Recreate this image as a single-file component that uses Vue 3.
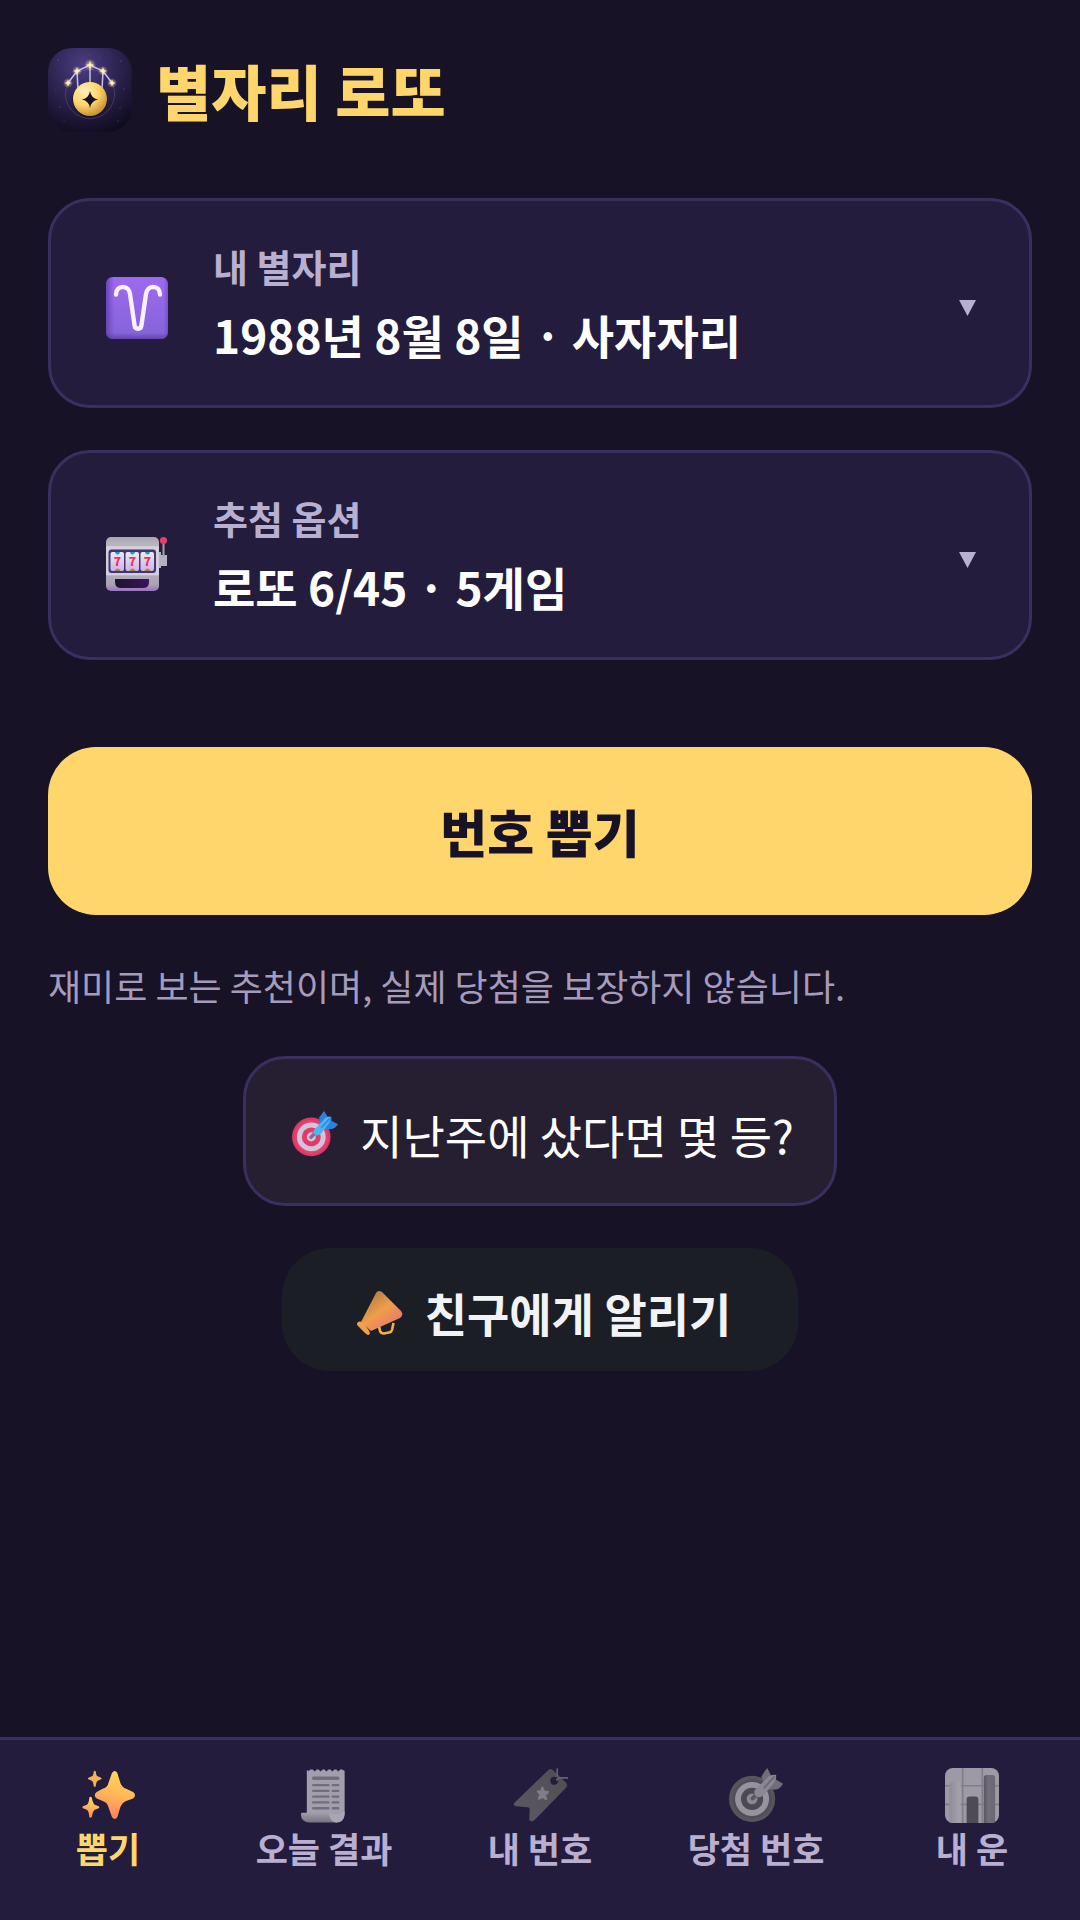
<script setup>
import { ref } from 'vue'

const cards = [
  { id: 'sign', label: '내 별자리', value: '1988년 8월 8일 · 사자자리' },
  { id: 'option', label: '추첨 옵션', value: '로또 6/45 · 5게임' },
]

const tabs = [
  { id: 'draw', label: '뽑기' },
  { id: 'today', label: '오늘 결과' },
  { id: 'mine', label: '내 번호' },
  { id: 'winning', label: '당첨 번호' },
  { id: 'luck', label: '내 운' },
]

const active = ref('draw')
</script>

<template>
  <div class="app">
    <header class="header">
      <svg class="logo" viewBox="0 0 84 84" aria-hidden="true">
        <defs>
          <radialGradient id="logo-bg" cx="0.42" cy="0.2" r="0.85">
            <stop offset="0" stop-color="#4b3d80" />
            <stop offset="0.5" stop-color="#2c2350" />
            <stop offset="1" stop-color="#100c1f" />
          </radialGradient>
          <radialGradient id="logo-ball" cx="0.35" cy="0.28" r="0.8">
            <stop offset="0" stop-color="#fff0bd" />
            <stop offset="0.5" stop-color="#ffd66b" />
            <stop offset="1" stop-color="#bd8428" />
          </radialGradient>
          <radialGradient id="logo-glow">
            <stop offset="0" stop-color="#ffe9a0" stop-opacity="0.8" />
            <stop offset="1" stop-color="#ffe9a0" stop-opacity="0" />
          </radialGradient>
        </defs>
        <rect width="84" height="84" rx="24" fill="url(#logo-bg)" />
        <g fill="#a79bd6" opacity="0.3">
          <circle cx="10" cy="12" r="0.8" /><circle cx="73" cy="13" r="0.8" />
          <circle cx="42" cy="7" r="0.6" /><circle cx="52" cy="8" r="0.6" />
          <circle cx="8" cy="42" r="0.6" /><circle cx="76" cy="41" r="0.7" />
          <circle cx="12" cy="59" r="0.8" /><circle cx="72" cy="60" r="0.7" />
          <circle cx="16" cy="73" r="0.6" /><circle cx="70" cy="73" r="0.7" />
        </g>
        <circle cx="42" cy="46" r="24.5" fill="none" stroke="#8a80a8" stroke-opacity="0.3" />
        <path d="M20 35 29 23 42 17 55 23 64 35M29 23 30 42M42 17V36M55 23 54 42" fill="none" stroke="#c9bdf5" stroke-width="1.5" />
        <g fill="url(#logo-glow)">
          <circle cx="20" cy="35" r="5" /><circle cx="29" cy="23" r="5" /><circle cx="42" cy="17" r="6" />
          <circle cx="55" cy="23" r="5" /><circle cx="64" cy="35" r="5" />
        </g>
        <path d="M20 31.500l1 2.500 2.500 1-2.500 1-1 2.500-1-2.500-2.500-1 2.500-1zM29 19l1 3 3 1-3 1-1 3-1-3-3-1 3-1zM42 12.500l1 3.500 3.500 1-3.500 1-1 3.500-1-3.500-3.500-1 3.500-1zM55 19l1 3 3 1-3 1-1 3-1-3-3-1 3-1zM64 31.500l1 2.500 2.500 1-2.500 1-1 2.500-1-2.500-2.500-1 2.500-1z" fill="#fff1bd" />
        <circle cx="42" cy="52" r="17.500" fill="#0d0919" opacity="0.5" />
        <circle cx="42" cy="51" r="17" fill="url(#logo-ball)" />
        <path d="M42 43Q43 50 50 51.500 43 53 42 60 41 53 34 51.500 41 50 42 43Z" fill="#171225" />
      </svg>
      <h1 class="title">별자리 로또</h1>
    </header>

    <main class="main">
      <div class="cards">
        <button v-for="card in cards" :key="card.id" type="button" class="card">
          <svg v-if="card.id === 'sign'" class="card-icon" viewBox="0 0 62 62" aria-hidden="true">
            <defs>
              <linearGradient id="aries-bg" x1="0" y1="0" x2="0" y2="1">
                <stop offset="0" stop-color="#9e69f0" />
                <stop offset="1" stop-color="#8364d8" />
              </linearGradient>
              <linearGradient id="aries-side" x1="0" y1="0" x2="1" y2="0">
                <stop offset="0" stop-color="#5f3ca8" stop-opacity="0.8" />
                <stop offset="0.130" stop-color="#5f3ca8" stop-opacity="0" />
                <stop offset="0.930" stop-color="#5f3ca8" stop-opacity="0" />
                <stop offset="1" stop-color="#5f3ca8" stop-opacity="0.5" />
              </linearGradient>
              <linearGradient id="aries-foot" x1="0" y1="0" x2="0" y2="1">
                <stop offset="0.900" stop-color="#5a3ba6" stop-opacity="0" />
                <stop offset="1" stop-color="#5a3ba6" stop-opacity="0.8" />
              </linearGradient>
            </defs>
            <rect width="62" height="62" rx="7" fill="url(#aries-bg)" />
            <rect width="62" height="62" rx="7" fill="url(#aries-side)" />
            <rect width="62" height="62" rx="7" fill="url(#aries-foot)" />
            <path d="M10 17.500C10 12.500 13 10 17 10S23.500 13 24 17L28.500 48C29 53 35 53 35.500 48L40 17C40.500 13 43 10 47 10S54 12.500 54 17.500" fill="none" stroke="#fbf0ff" stroke-width="4.400" stroke-linecap="round" />
          </svg>
          <svg v-else class="card-icon" viewBox="0 -8 62 62" aria-hidden="true">
            <defs>
              <linearGradient id="slot-body" x1="0" y1="0" x2="0" y2="1">
                <stop offset="0" stop-color="#aaa5b0" />
                <stop offset="0.160" stop-color="#bbb6c0" />
                <stop offset="0.180" stop-color="#d5cfdf" />
                <stop offset="0.700" stop-color="#d5cde1" />
                <stop offset="0.720" stop-color="#b0aab8" />
                <stop offset="0.880" stop-color="#aaa2b4" />
                <stop offset="1" stop-color="#9b71c4" />
              </linearGradient>
              <linearGradient id="slot-reel" x1="0" y1="0" x2="0" y2="1">
                <stop offset="0" stop-color="#eeeaf2" />
                <stop offset="1" stop-color="#ceb4e9" />
              </linearGradient>
              <linearGradient id="slot-mouth" x1="0" y1="0" x2="1" y2="0">
                <stop offset="0" stop-color="#1e1233" />
                <stop offset="1" stop-color="#3a1459" />
              </linearGradient>
            </defs>
            <path d="M52 15h3v3h6v11h-6v2h-3z" fill="#b7b1bf" />
            <path d="M57.500 6v14" stroke="#a6a1ad" stroke-width="2" />
            <circle cx="57.500" cy="3.500" r="3.600" fill="#ea3d63" />
            <rect width="53" height="54" rx="5" fill="url(#slot-body)" />
            <rect x="2.500" y="12.500" width="47.500" height="23.500" rx="3" fill="#40376f" />
            <g v-for="n in 3" :key="n" :transform="`translate(${4.5 + (n - 1) * 15} 15)`">
              <rect width="13.500" height="19" rx="2" fill="url(#slot-reel)" />
              <path d="M4.500 0h5q-.5 2.500-2.500 2.500T4.500 0z" fill="#1f94d5" />
              <path d="M4 19q.5-2.500 3-2.500t3 2.500z" fill="#b68139" />
              <text x="7" y="14" text-anchor="middle" class="reel">7</text>
            </g>
            <path d="M9 42h34v3q0 6-6 6H15q-6 0-6-6z" fill="url(#slot-mouth)" />
          </svg>
          <span class="card-text">
            <span class="card-label">{{ card.label }}</span>
            <span class="card-value">{{ card.value }}</span>
          </span>
          <svg class="caret" viewBox="0 0 17 16" aria-hidden="true"><path d="M0 0h17L8.500 16z" fill="#b9afd1" /></svg>
        </button>
      </div>

      <button type="button" class="draw">번호 뽑기</button>
      <p class="note">재미로 보는 추천이며, 실제 당첨을 보장하지 않습니다.</p>

      <button type="button" class="pill check">
        <svg class="pill-icon" viewBox="0 0 56 56" aria-hidden="true">
          <circle cx="23.500" cy="31.500" r="23.500" fill="#d83a68" />
          <circle cx="23.500" cy="31.500" r="21" fill="#e63f6b" />
          <circle cx="23.500" cy="31.500" r="17.500" fill="#cfc5dd" />
          <circle cx="23.500" cy="31.500" r="11.500" fill="#e63867" />
          <circle cx="23.500" cy="31.500" r="5.500" fill="#cfc3da" />
          <path d="M23 32l8-8" stroke="#77738a" stroke-width="4" stroke-linecap="round" />
          <path d="M34 15 33 8Q37 3 39 0L44 8 48 7 48 12 56 16Q53 21 48 22L40 22Z" fill="#2c80e4" />
          <path d="M26 24 40 9q4-3 7-2-0 4-2 8L35 28q-4 3-7 1-3-2-2-5z" fill="#50b4f3" />
          <path d="M36 20 46 9" stroke="#2c8be4" stroke-width="2" stroke-linecap="round" />
        </svg>
        <span>지난주에 샀다면 몇 등?</span>
      </button>

      <button type="button" class="pill share">
        <svg class="pill-icon" viewBox="0 0 46 46" aria-hidden="true">
          <defs>
            <linearGradient id="horn" x1="0.200" y1="0.150" x2="0.750" y2="0.850">
              <stop offset="0" stop-color="#b88143" />
              <stop offset="0.500" stop-color="#ef9d4b" />
              <stop offset="1" stop-color="#ea7d67" />
            </linearGradient>
          </defs>
          <path d="M22 36 23 41Q24 43.500 27 43.500L32 42.500Q34.500 42 35 40L36.500 33" fill="none" stroke="#f5b044" stroke-width="2.600" />
          <path d="M19 3Q21-.5 25 2L44 21Q47 25 43 28L14 41 4 32Z" fill="url(#horn)" />
          <path d="M1 32Q4 30 8 35T13 43Q12 47 8 43L1 36Q-1 34 1 32Z" fill="#f2a04a" />
        </svg>
        <span>친구에게 알리기</span>
      </button>
    </main>

    <nav class="tabs">
      <button
        v-for="tab in tabs"
        :key="tab.id"
        type="button"
        class="tab"
        :class="{ active: tab.id === active }"
        @click="active = tab.id"
      >
        <svg v-if="tab.id === 'draw'" class="tab-icon" viewBox="0 0 56 56" aria-hidden="true">
          <defs>
            <linearGradient id="spark" x1="0.600" y1="0" x2="0.350" y2="1">
              <stop offset="0" stop-color="#ffd95c" />
              <stop offset="0.500" stop-color="#ffb657" />
              <stop offset="1" stop-color="#ff7e67" />
            </linearGradient>
          </defs>
          <path d="M31.500 5Q34.500 1 37 5L40 15Q42 20 46 21L53 24.500Q57 27.500 53 31L46 33.500Q42 35 40 40L37 50Q34.500 54 31.500 50L28 40Q27 35 22 33.500L16 31Q12 27.500 16 24.500L22 21Q27 20 28 15Z" fill="url(#spark)" />
          <path d="M13 3.500Q14 2 15 3.500 15.500 8 17 8.500L20.500 10Q21.500 11 20.500 11.500L17 13Q15.500 14 15 18.500 14 20 13 18.500 12.500 14 11 13L7.500 11.500Q6.500 11 7.500 10L11 8.500Q12.500 8 13 3.500Z" fill="#f5b359" />
          <path d="M8.500 30Q9.500 28.500 11 30 12 36 14 37.500L18 39Q19.500 40 18 41L14 42.500Q12 44 11 50 9.500 51.500 8.500 50 8 44 6 42.500L2 41Q.5 40 2 39L6 37.500Q8 36 8.500 30Z" fill="url(#spark)" />
        </svg>

        <svg v-else-if="tab.id === 'today'" class="tab-icon" viewBox="0 0 56 56" aria-hidden="true">
          <defs>
            <linearGradient id="curl" x1="0" y1="0" x2="0" y2="1">
              <stop offset="0" stop-color="#a19da9" />
              <stop offset="1" stop-color="#77737f" />
            </linearGradient>
          </defs>
          <path d="M10 2 12 3 13.500 1.500H16L18 3.500 20 1.500H22L24 3.500 26 1.500H28L30 3.500 32 1.500H34L36 3.500 38 1.500H40L42 3.500 44 1.500H46L48.500 3V47Q48 55.500 40 55.500L10 48Z" fill="#a29eac" />
          <path d="M5 45.500H33Q32 53 41 55.500H13Q4 55 4 47Q4 46 5 45.500Z" fill="url(#curl)" />
          <path d="M33 46Q41 49 48.500 44 49 55 40 55.500 33 55 33 46Z" fill="#aaa6b3" />
          <g stroke="#716d7b" stroke-linecap="round">
            <path d="M17 10.500H41.500" stroke-width="3.600" />
            <path d="M16.500 17.500H32M36.500 17.500H42M16.500 23.300H32M36.500 23.300H42M16.500 29.200H32M36.500 29.200H42M16.500 35H32M36.500 35H42M16.500 41H32M36.500 41H42" stroke-width="2.400" />
          </g>
        </svg>

        <svg v-else-if="tab.id === 'mine'" class="tab-icon" viewBox="0 0 56 56" aria-hidden="true">
          <defs>
            <linearGradient id="tag" x1="1" y1="0" x2="0" y2="1">
              <stop offset="0" stop-color="#504d55" />
              <stop offset="1" stop-color="#5b5861" />
            </linearGradient>
          </defs>
          <path fill-rule="evenodd" d="M36 2Q38 0 40.500 2L54 15Q56 17.500 54 20L22 53Q19 55.500 16.500 53L17 42Q17 40 15 40L3 39Q-.5 38 1.500 35.500ZM42 9A4 4 0 1 0 42 17 4 4 0 1 0 42 9Z" fill="url(#tag)" />
          <path d="M29 19Q31 18 32 23L36.500 23.500Q37 26 33.500 27.500L35 32Q33 33.500 30.500 30.500L26 32.500Q24.500 30 27 27.500L24 24Q25 22 28 23Z" fill="#817d88" />
          <path d="M45 0.500V9M44 12.500 47 10H56" fill="none" stroke="#66626c" stroke-width="1.800" />
        </svg>

        <svg v-else-if="tab.id === 'winning'" class="tab-icon" viewBox="0 0 56 56" aria-hidden="true">
          <circle cx="23.500" cy="31.500" r="23.500" fill="#58545e" />
          <circle cx="23.500" cy="31.500" r="20" fill="#524e58" />
          <circle cx="23.500" cy="31.500" r="17.300" fill="#96929e" />
          <circle cx="23.500" cy="31.500" r="11.300" fill="#4d4953" />
          <circle cx="23.500" cy="31.500" r="5.500" fill="#8b8793" />
          <path d="M24 31l6-6" stroke="#5a5662" stroke-width="4" stroke-linecap="round" />
          <path d="M35 14 33 9Q36 3 39 0L43 8 48 7 48 12 55 16Q52 21 48 22L40 22Z" fill="#716d79" />
          <path d="M26 23 40 9q4-3 8-2-0 4-2 8L35 28q-4 3-7 1-3-2-2-6z" fill="#8b8793" />
          <path d="M36 20 46 9" stroke="#6c6874" stroke-width="2" stroke-linecap="round" />
        </svg>

        <svg v-else class="tab-icon" viewBox="0 0 56 56" aria-hidden="true">
          <defs>
            <linearGradient id="bar-mid" x1="0" y1="0" x2="1" y2="0">
              <stop offset="0" stop-color="#595562" />
              <stop offset="0.400" stop-color="#716d79" />
              <stop offset="1" stop-color="#6b6773" />
            </linearGradient>
            <linearGradient id="bar-light" x1="0" y1="0" x2="1" y2="0">
              <stop offset="0" stop-color="#908c98" />
              <stop offset="1" stop-color="#a7a3ae" />
            </linearGradient>
            <clipPath id="chart-frame"><rect width="55" height="56" rx="8" /></clipPath>
          </defs>
          <g clip-path="url(#chart-frame)">
            <rect width="55" height="56" fill="#9d99a5" />
            <path d="M18 0V56M38 0V56M0 18H55M0 37H55" stroke="#817d89" stroke-width="1.600" />
            <path d="M4.500 56V17Q4.500 14 7.500 14H13Q16 14 16 17V56Z" fill="url(#bar-light)" />
            <path d="M22 56V32Q22 29 25 29H31Q34 29 34 32V56Z" fill="#4f4b56" />
            <path d="M39.500 56V10Q39.500 7 42.500 7H48Q51 7 51 10V56Z" fill="url(#bar-mid)" />
          </g>
        </svg>
        <span>{{ tab.label }}</span>
      </button>
    </nav>
  </div>
</template>

<style>
body {
  margin: 0;
  background: #171225;
}
</style>

<style scoped>
.app {
  display: flex;
  flex-direction: column;
  min-height: 100vh;
  background: #171225;
  color: #fff;
  font-family: "Noto Sans CJK KR", "Noto Sans", sans-serif;
}

button {
  margin: 0;
  border: 0;
  color: inherit;
  font-family: inherit;
  cursor: pointer;
}

svg {
  flex: none;
  display: block;
}

.header {
  display: flex;
  align-items: center;
  gap: 24px;
  padding: 48px 48px 0;
}

.logo {
  width: 84px;
  height: 84px;
}

.title {
  margin: 0;
  color: #ffd66b;
  font-size: 60px;
  font-weight: 900;
  line-height: 84px;
}

.main {
  flex: 1;
  display: flex;
  flex-direction: column;
  align-items: center;
  padding: 66px 48px 48px;
}

.cards {
  display: flex;
  flex-direction: column;
  gap: 42px;
  width: 100%;
}

.card {
  display: flex;
  align-items: center;
  width: 100%;
  padding: 36px 53px 36px 55px;
  border: 3px solid #3a2f5f;
  border-radius: 42px;
  background: #241c3c;
  text-align: left;
}

.card-icon {
  width: 62px;
  height: 62px;
  margin: 10px 45px 0 0;
}

.reel {
  fill: #f02f5b;
  font-size: 12px;
  font-weight: 900;
}

.card-text {
  flex: 1;
  display: flex;
  flex-direction: column;
  gap: 4px;
}

.card-label {
  color: #b9afd1;
  font-size: 38px;
  font-weight: 700;
  line-height: 58px;
}

.card-value {
  font-size: 46px;
  font-weight: 700;
  line-height: 70px;
}

.caret {
  width: 17px;
  height: 16px;
  margin-top: 10px;
}

.draw {
  width: 100%;
  margin-top: 87px;
  padding: 42px;
  border-radius: 48px;
  background: #ffd66b;
  color: #171225;
  font-size: 51px;
  font-weight: 900;
  line-height: 84px;
}

.note {
  align-self: stretch;
  margin: 42px 0;
  color: #a59bbc;
  font-size: 36px;
  line-height: 57px;
}

.pill {
  display: flex;
  align-items: center;
  gap: 22px;
  font-size: 46px;
}

.pill-icon {
  width: 46px;
  height: 46px;
}

.check {
  padding: 42px 40px 36px 46px;
  border: 3px solid #3a2f5f;
  border-radius: 42px;
  background: #251f31;
  line-height: 66px;
}

.share {
  margin-top: 42px;
  padding: 33px 67px 27px 75px;
  border-radius: 48px;
  background: #1c1e25;
  color: #f2f3f7;
  font-weight: 700;
  line-height: 63px;
}

.tabs {
  display: flex;
  border-top: 3px solid #3a2f5f;
  background: #241c3c;
}

.tab {
  flex: 1 1 0;
  display: flex;
  flex-direction: column;
  align-items: center;
  padding: 28px 0 47px;
  background: none;
  color: #b9afd1;
  font-size: 35px;
  font-weight: 700;
  line-height: 50px;
}

.tab.active {
  color: #ffd66b;
}

.tab-icon {
  width: 55px;
  height: 55px;
}
</style>
